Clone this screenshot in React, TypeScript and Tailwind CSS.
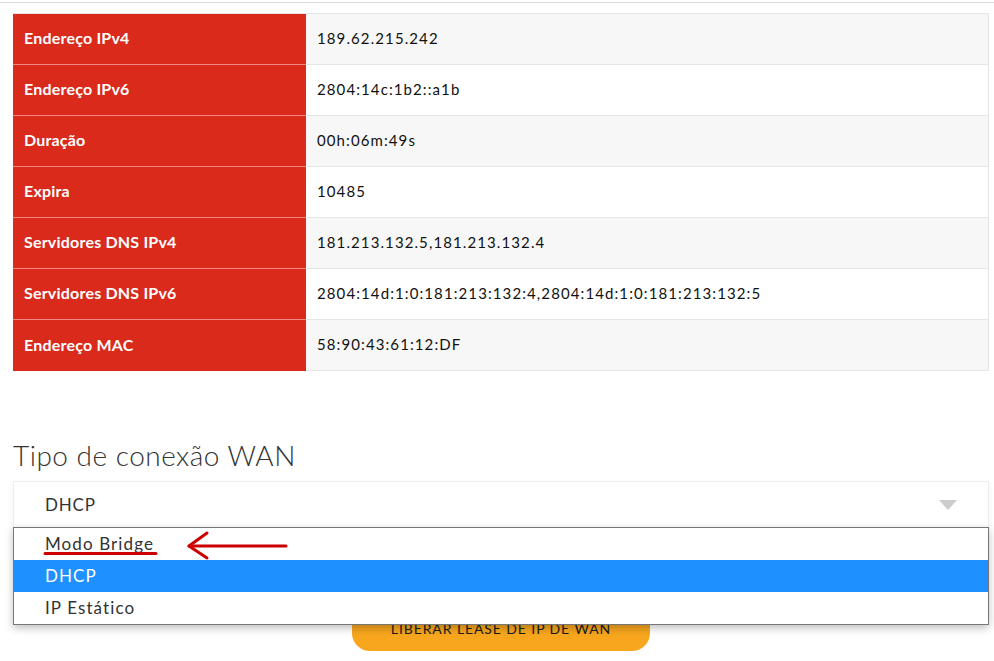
import React from "react";

const rows: [string, string][] = [
  ["Endereço IPv4", "189.62.215.242"],
  ["Endereço IPv6", "2804:14c:1b2::a1b"],
  ["Duração", "00h:06m:49s"],
  ["Expira", "10485"],
  ["Servidores DNS IPv4", "181.213.132.5,181.213.132.4"],
  ["Servidores DNS IPv6", "2804:14d:1:0:181:213:132:4,2804:14d:1:0:181:213:132:5"],
  ["Endereço MAC", "58:90:43:61:12:DF"],
];

const options = ["Modo Bridge", "DHCP", "IP Estático"];

export default function App() {
  return (
    <div
      className="relative h-[661px] w-full overflow-hidden bg-white text-[#222]"
      style={{ fontFamily: "Lato, 'Noto Sans', sans-serif" }}
    >
      <div className="pt-[2px]">
        <div className="h-px w-full bg-[#dedede]" />
      </div>

      <div className="px-[13px] pt-[10px] pr-[5px]">
        {/* WAN info table */}
        <div className="w-[976px] border-t border-r border-[#e6e6e6]">
          {rows.map(([label, value], i) => (
            <div key={label} className="flex h-[51px]">
              <div
                className={
                  "flex w-[293px] items-center bg-[#d92a1c] pb-[2px] pl-[11px] text-[16px] font-bold tracking-[0.2px] text-white " +
                  (i < rows.length - 1 ? "border-b border-[#eb8a82]" : "")
                }
              >
                {label}
              </div>
              <div
                className={
                  "flex flex-1 items-center border-b border-[#e6e6e6] pb-[2px] pl-[11px] text-[15px] tracking-[1.1px] text-[#111] " +
                  (i % 2 === 0 ? "bg-[#f7f7f7]" : "bg-white")
                }
              >
                {value}
              </div>
            </div>
          ))}
        </div>

        {/* Connection type */}
        <h2 className="mt-[66px] text-[28px] leading-[36px] font-light tracking-[0.5px] text-[#333]">
          Tipo de conexão WAN
        </h2>

        <div className="relative mt-[8px] w-[976px]">
          <div className="flex h-[47px] items-center justify-between border border-[#eeeeee] pl-[31px] pr-[31px] text-[17px] tracking-[0.8px] text-[#333] shadow-[0_2px_6px_rgba(0,0,0,0.06)]">
            <span>DHCP</span>
            <svg width="18" height="10" viewBox="0 0 18 10">
              <path d="M0 0 H18 L9 10 Z" fill="#cccccc" />
            </svg>
          </div>

          <div className="flex justify-center pt-[78px]">
            <div className="flex h-[45px] w-[298px] items-end justify-center rounded-[18px] bg-[#f7a61e] pb-[12px] text-[14px] tracking-[0.9px] text-[#1a1a1a]">
              LIBERAR LEASE DE IP DE WAN
            </div>
          </div>

          {/* open dropdown list */}
          <div className="absolute left-0 top-[46px] w-[976px] border border-[#777777] bg-white shadow-[0_3px_8px_rgba(0,0,0,0.25)]">
            {options.map((o) => (
              <div
                key={o}
                className={
                  "flex h-[32px] items-center pl-[31px] text-[17px] tracking-[1.1px] " +
                  (o === "DHCP" ? "bg-[#1e90ff] text-white" : "text-[#333]")
                }
              >
                {o}
              </div>
            ))}
          </div>
        </div>
      </div>

      {/* red annotation */}
      <svg
        className="pointer-events-none absolute left-0 top-0"
        width="994"
        height="661"
        viewBox="0 0 994 661"
      >
        <path d="M45 553.5 H156" stroke="#cc0000" strokeWidth="3" strokeLinecap="round" />
        <path d="M189 546 H286" stroke="#cc0000" strokeWidth="3" strokeLinecap="round" />
        <path d="M207 533 L189 546 L207 558" stroke="#cc0000" strokeWidth="3" fill="none" strokeLinecap="round" strokeLinejoin="round" />
      </svg>
    </div>
  );
}
